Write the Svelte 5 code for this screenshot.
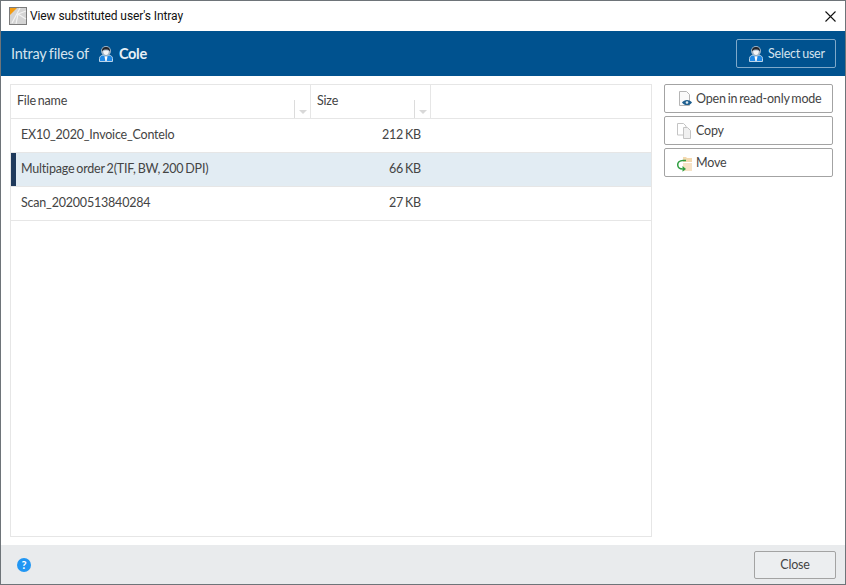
<script lang="ts">
  const files = [
    { name: "EX10_2020_Invoice_Contelo", size: "212 KB", selected: false },
    { name: "Multipage order 2(TIF, BW, 200 DPI)", size: "66 KB", selected: true },
    { name: "Scan_20200513840284", size: "27 KB", selected: false },
  ];
</script>

{#snippet userIcon()}
  <svg class="user-icon" width="18" height="18" viewBox="0 0 18 18">
    <path d="M2.500 16.500v-3C2.500 11.500 4 10.500 6 10L9 11.500 12 10c2 .5 3.500 1.500 3.500 3.500v3z" fill="#1e88e5" stroke="#b9d3e8" stroke-width="1" />
    <path d="M7.500 11.500h3L9.600 16H8.400z" fill="#fff" />
    <circle cx="9" cy="6" r="5" fill="#9fb4c6" />
    <path d="M5 6.500C4.600 3.400 6.600 2 9 2s4.400 1.400 4 4.500C12.400 5 11 4.400 9 4.400S5.600 5 5 6.500z" fill="#23262c" />
    <path d="M6.200 6.200C7 5.400 11 5.400 11.800 6.200 11.800 8.500 10.500 10 9 10S6.200 8.500 6.200 6.200z" fill="#f4f6f8" />
  </svg>
{/snippet}

<div class="window">
  <div class="titlebar">
    <svg class="app-icon" width="18" height="18" viewBox="0 0 18 18">
      <rect x="0.500" y="0.500" width="17" height="17" fill="#d4d4d4" stroke="#7b7b7b" />
      <path d="M1 1h7L1 8z" fill="#f39c12" />
      <path d="M3 16L11 1M9 7l8-3M9 7l8 5M9 7l-2 10" stroke="#f3f3f3" stroke-width="1.200" fill="none" />
    </svg>
    <span class="title">View substituted user's Intray</span>
    <button class="x" aria-label="Close window">
      <svg width="11" height="11" viewBox="0 0 11 11">
        <path d="M.5.5l10 10M10.500.5l-10 10" stroke="#111" stroke-width="1.100" fill="none" />
      </svg>
    </button>
  </div>

  <div class="header">
    <span class="label">Intray files of</span>
    {@render userIcon()}
    <span class="user">Cole</span>
    <button class="select-user">
      {@render userIcon()}
      Select user
    </button>
  </div>

  <div class="content">
    <div class="table">
      <div class="row head">
        <div class="cell name">
          File name
          <span class="sort"><i></i></span>
        </div>
        <div class="cell size">
          Size
          <span class="sort"><i></i></span>
        </div>
      </div>
      {#each files as file}
        <div class="row item" class:selected={file.selected}>
          <div class="cell name">{file.name}</div>
          <div class="cell size">{file.size}</div>
        </div>
      {/each}
    </div>

    <div class="actions">
      <button>
        <svg width="18" height="18" viewBox="0 0 18 18">
          <path d="M3.500 1.500h7l3 3v11h-10z" fill="#fafafa" stroke="#b5b5b5" />
          <path d="M6 12.500c2-3.400 8-3.400 10 0-2 3.400-8 3.400-10 0z" fill="#1f5f8f" />
          <circle cx="11" cy="12.500" r="1.300" fill="#dfeaf2" />
        </svg>
        <span>Open in read-only mode</span>
      </button>
      <button>
        <svg width="18" height="18" viewBox="0 0 18 18">
          <path d="M1.500 1.500h6l2.500 2.500v9h-8.500z" fill="#fff" stroke="#c4c4c4" />
          <path d="M7.500 5.500h4l3 3v8h-7z" fill="#f0f0f0" stroke="#c4c4c4" />
        </svg>
        <span>Copy</span>
      </button>
      <button>
        <svg width="18" height="18" viewBox="0 0 18 18">
          <path d="M7 3h3l1 1h5v4H7z" fill="#f3d9b0" />
          <path d="M7 9h9v8H7z" fill="#f6e3c6" />
          <path d="M10 6.500H7C3.500 6.500 1.500 8.500 1.700 11c.2 2.500 2.300 4 5 4" stroke="#2e9e3f" stroke-width="1.500" fill="none" />
          <path d="M6.500 12l3.500 3-3.500 2.800z" fill="#2e9e3f" />
        </svg>
        <span>Move</span>
      </button>
    </div>
  </div>

  <div class="footer">
    <span class="help">?</span>
    <button class="close">Close</button>
  </div>
</div>

<style>
  :global(body) {
    margin: 0;
  }

  .window {
    width: 846px;
    height: 585px;
    box-sizing: border-box;
    border: 1px solid #6e7479;
    display: flex;
    flex-direction: column;
    background: #fff;
    font-family: Lato, sans-serif;
    font-size: 12.5px;
    letter-spacing: -0.2px;
    word-spacing: -1px;
    color: #444;
  }

  button {
    font: inherit;
    letter-spacing: inherit;
    word-spacing: inherit;
    cursor: pointer;
  }

  .titlebar {
    height: 30px;
    flex: none;
    display: flex;
    align-items: center;
    padding: 0 9px 0 8px;
    color: #111;
  }

  .app-icon {
    margin-right: 3px;
  }

  .title {
    font-family: Roboto, sans-serif;
    font-size: 12px;
    letter-spacing: -0.1px;
    word-spacing: 0;
  }

  .x {
    margin-left: auto;
    display: flex;
    padding: 0;
    background: none;
    border: none;
  }

  .header {
    height: 45px;
    flex: none;
    display: flex;
    align-items: center;
    background: #00528f;
    color: #d5e3ee;
    padding: 0 9px 0 10px;
    font-size: 14.500px;
    letter-spacing: -0.2px;
    word-spacing: -1px;
  }

  .header .user-icon {
    margin-left: 8px;
    margin-right: 4px;
  }

  .user {
    font-weight: 700;
    letter-spacing: -0.3px;
    color: #e8f0f6;
  }

  .select-user {
    margin-left: auto;
    width: 100px;
    height: 29px;
    display: flex;
    align-items: center;
    box-sizing: border-box;
    background: none;
    border: 1px solid #7fa9ca;
    border-radius: 2px;
    color: #d5e3ee;
    font-size: 12.500px;
    padding: 0;
    white-space: nowrap;
  }

  .select-user .user-icon {
    margin-left: 10px;
    margin-right: 3px;
  }

  .content {
    flex: 1;
    display: flex;
    min-height: 0;
    padding: 8px 12px 8px 9px;
    gap: 12px;
  }

  .table {
    width: 642px;
    box-sizing: border-box;
    border: 1px solid #e6e6e6;
  }

  .row {
    display: flex;
    height: 34px;
    box-sizing: border-box;
    border-bottom: 1px solid #e6e6e6;
  }

  .cell {
    display: flex;
    align-items: center;
    box-sizing: border-box;
    white-space: pre;
  }

  .name {
    width: 300px;
  }

  .size {
    width: 120px;
  }

  .head .cell {
    position: relative;
    padding-left: 6px;
    padding-bottom: 2px;
    border-right: 1px solid #e6e6e6;
    white-space: normal;
  }

  .sort {
    position: absolute;
    right: 0;
    bottom: 0;
    width: 16px;
    height: 18px;
    box-sizing: border-box;
    border-left: 1px solid #dcdcdc;
  }

  .sort i {
    position: absolute;
    left: 4px;
    top: 10px;
    border-left: 4px solid transparent;
    border-right: 4px solid transparent;
    border-top: 4px solid #d8d8d8;
  }

  .item .cell {
    padding-bottom: 2px;
  }

  .item .name {
    padding-left: 10px;
  }

  .item .size {
    justify-content: flex-end;
    padding-right: 10px;
  }

  .item.selected {
    background: #e2ecf3;
    box-shadow: inset 5px 0 0 #1f3a5c;
  }

  .actions {
    width: 169px;
    display: flex;
    flex-direction: column;
    gap: 3px;
  }

  .actions button {
    height: 29px;
    display: flex;
    align-items: center;
    gap: 2px;
    padding: 0 0 0 11px;
    background: #fff;
    border: 1px solid #a3a3a3;
    border-radius: 2px;
    color: #444;
    white-space: nowrap;
  }

  .footer {
    height: 39px;
    flex: none;
    display: flex;
    align-items: center;
    background: #e9ebed;
    padding: 0 9px 0 16px;
  }

  .help {
    width: 14px;
    height: 14px;
    border-radius: 50%;
    background: #2196f3;
    color: #fff;
    font-weight: 700;
    font-size: 11px;
    line-height: 14px;
    text-align: center;
  }

  .close {
    margin-left: auto;
    width: 82px;
    height: 28px;
    background: #eceef0;
    border: 1px solid #a3a3a3;
    border-radius: 2px;
    color: #444;
  }
</style>
